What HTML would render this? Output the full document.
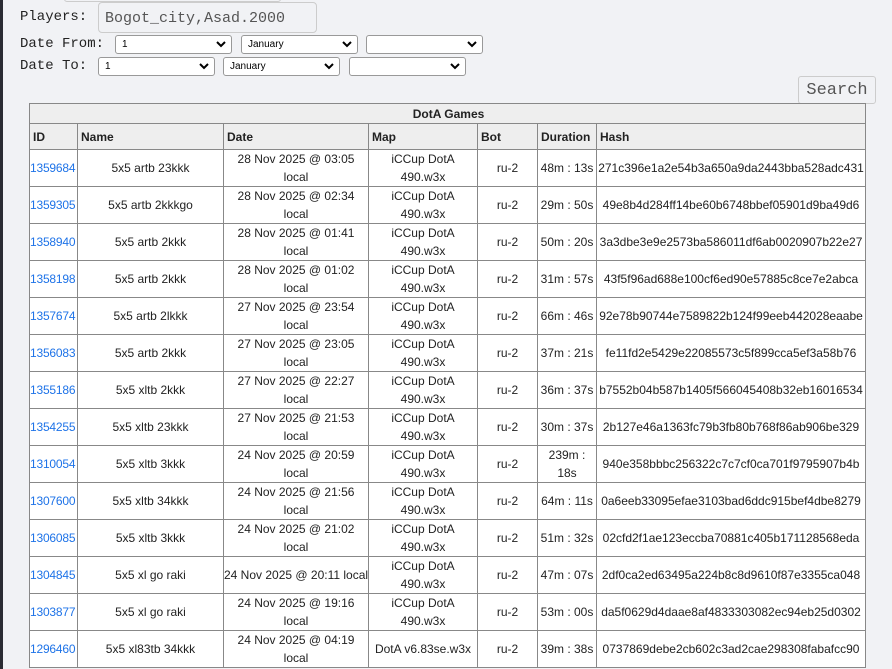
<!DOCTYPE html>
<html><head><meta charset="utf-8"><style>
*{box-sizing:border-box}
html,body{margin:0;width:892px;height:669px;overflow:hidden}
body{background:#f1f2f5;font-family:"Liberation Sans",Arial,sans-serif;position:relative}
.strip{position:absolute;left:0;top:0;width:3px;height:669px;background:#2a2b33}
.lbl{position:absolute;font-family:"Liberation Mono",monospace;font-size:14px;color:#222}
.inp{position:absolute;left:98px;top:2px;width:219px;height:31px;border:1px solid #ccc;border-radius:4px;background:#f1f2f5;font-family:"Liberation Mono",monospace;font-size:15px;color:#555;padding:7px 6px}
.topbox{position:absolute;left:64px;top:-4px;width:217px;height:6px;border:1px solid #ccc;border-radius:3px}
.sel{position:absolute;height:19px;width:117px;border:1px solid #999;border-radius:3px;background:#fff;font-size:10px;color:#000;padding:2px 6px;line-height:13px}
.sel svg{position:absolute;right:5px;top:5px}
.btn{position:absolute;left:798px;top:76px;width:78px;height:28px;border:1px solid #ccc;border-radius:3px;background:#f1f2f5;font-family:"Liberation Mono",monospace;font-size:17px;color:#555;text-align:center;line-height:27px}
table{position:absolute;left:29px;top:103px;width:836px;table-layout:fixed;border-collapse:collapse;background:#fff;font-size:12px;color:#222}
td,th{border:1px solid #888;padding:0 1px;line-height:18px;overflow:hidden}
th{background:#eee;text-align:left;font-weight:bold;height:26px;padding-left:3px}
th.t{text-align:center;height:20px}
td{text-align:center;height:37px}
td.id{text-align:left;color:#1e73e8;padding:0;overflow:visible;letter-spacing:-0.2px}
td.h{white-space:nowrap;padding:0}
</style></head><body>
<div class="strip"></div>
<div class="topbox"></div>
<div class="lbl" style="left:20px;top:9px">Players:</div>
<div class="inp">Bogot_city,Asad.2000</div>
<div class="lbl" style="left:20px;top:36px">Date From:</div>
<div class="lbl" style="left:20px;top:58px">Date To:</div>
<div class="sel" style="left:115px;top:35px">1<svg width="10" height="7" viewBox="0 0 10 7"><path d="M1 1l4 4 4-4" stroke="#000" stroke-width="2" fill="none"/></svg></div>
<div class="sel" style="left:241px;top:35px">January<svg width="10" height="7" viewBox="0 0 10 7"><path d="M1 1l4 4 4-4" stroke="#000" stroke-width="2" fill="none"/></svg></div>
<div class="sel" style="left:366px;top:35px"><svg width="10" height="7" viewBox="0 0 10 7"><path d="M1 1l4 4 4-4" stroke="#000" stroke-width="2" fill="none"/></svg></div>
<div class="sel" style="left:98px;top:57px">1<svg width="10" height="7" viewBox="0 0 10 7"><path d="M1 1l4 4 4-4" stroke="#000" stroke-width="2" fill="none"/></svg></div>
<div class="sel" style="left:223px;top:57px">January<svg width="10" height="7" viewBox="0 0 10 7"><path d="M1 1l4 4 4-4" stroke="#000" stroke-width="2" fill="none"/></svg></div>
<div class="sel" style="left:349px;top:57px"><svg width="10" height="7" viewBox="0 0 10 7"><path d="M1 1l4 4 4-4" stroke="#000" stroke-width="2" fill="none"/></svg></div>
<div class="btn">Search</div>
<table>
<colgroup><col style="width:48px"><col style="width:146px"><col style="width:145px"><col style="width:109px"><col style="width:60px"><col style="width:59px"><col style="width:269px"></colgroup>
<tr><th class="t" colspan="7">DotA Games</th></tr>
<tr><th>ID</th><th>Name</th><th>Date</th><th>Map</th><th>Bot</th><th>Duration</th><th>Hash</th></tr>
<tr><td class="id">1359684</td><td>5x5 artb 23kkk</td><td>28 Nov 2025 @ 03:05 local</td><td>iCCup DotA 490.w3x</td><td>ru-2</td><td class="h">48m : 13s</td><td class="h">271c396e1a2e54b3a650a9da2443bba528adc431</td></tr>
<tr><td class="id">1359305</td><td>5x5 artb 2kkkgo</td><td>28 Nov 2025 @ 02:34 local</td><td>iCCup DotA 490.w3x</td><td>ru-2</td><td class="h">29m : 50s</td><td class="h">49e8b4d284ff14be60b6748bbef05901d9ba49d6</td></tr>
<tr><td class="id">1358940</td><td>5x5 artb 2kkk</td><td>28 Nov 2025 @ 01:41 local</td><td>iCCup DotA 490.w3x</td><td>ru-2</td><td class="h">50m : 20s</td><td class="h">3a3dbe3e9e2573ba586011df6ab0020907b22e27</td></tr>
<tr><td class="id">1358198</td><td>5x5 artb 2kkk</td><td>28 Nov 2025 @ 01:02 local</td><td>iCCup DotA 490.w3x</td><td>ru-2</td><td class="h">31m : 57s</td><td class="h">43f5f96ad688e100cf6ed90e57885c8ce7e2abca</td></tr>
<tr><td class="id">1357674</td><td>5x5 artb 2lkkk</td><td>27 Nov 2025 @ 23:54 local</td><td>iCCup DotA 490.w3x</td><td>ru-2</td><td class="h">66m : 46s</td><td class="h">92e78b90744e7589822b124f99eeb442028eaabe</td></tr>
<tr><td class="id">1356083</td><td>5x5 artb 2kkk</td><td>27 Nov 2025 @ 23:05 local</td><td>iCCup DotA 490.w3x</td><td>ru-2</td><td class="h">37m : 21s</td><td class="h">fe11fd2e5429e22085573c5f899cca5ef3a58b76</td></tr>
<tr><td class="id">1355186</td><td>5x5 xltb 2kkk</td><td>27 Nov 2025 @ 22:27 local</td><td>iCCup DotA 490.w3x</td><td>ru-2</td><td class="h">36m : 37s</td><td class="h">b7552b04b587b1405f566045408b32eb16016534</td></tr>
<tr><td class="id">1354255</td><td>5x5 xltb 23kkk</td><td>27 Nov 2025 @ 21:53 local</td><td>iCCup DotA 490.w3x</td><td>ru-2</td><td class="h">30m : 37s</td><td class="h">2b127e46a1363fc79b3fb80b768f86ab906be329</td></tr>
<tr><td class="id">1310054</td><td>5x5 xltb 3kkk</td><td>24 Nov 2025 @ 20:59 local</td><td>iCCup DotA 490.w3x</td><td>ru-2</td><td>239m : 18s</td><td class="h">940e358bbbc256322c7c7cf0ca701f9795907b4b</td></tr>
<tr><td class="id">1307600</td><td>5x5 xltb 34kkk</td><td>24 Nov 2025 @ 21:56 local</td><td>iCCup DotA 490.w3x</td><td>ru-2</td><td class="h">64m : 11s</td><td class="h">0a6eeb33095efae3103bad6ddc915bef4dbe8279</td></tr>
<tr><td class="id">1306085</td><td>5x5 xltb 3kkk</td><td>24 Nov 2025 @ 21:02 local</td><td>iCCup DotA 490.w3x</td><td>ru-2</td><td class="h">51m : 32s</td><td class="h">02cfd2f1ae123eccba70881c405b171128568eda</td></tr>
<tr><td class="id">1304845</td><td>5x5 xl go raki</td><td class="h">24 Nov 2025 @ 20:11 local</td><td>iCCup DotA 490.w3x</td><td>ru-2</td><td class="h">47m : 07s</td><td class="h">2df0ca2ed63495a224b8c8d9610f87e3355ca048</td></tr>
<tr><td class="id">1303877</td><td>5x5 xl go raki</td><td>24 Nov 2025 @ 19:16 local</td><td>iCCup DotA 490.w3x</td><td>ru-2</td><td class="h">53m : 00s</td><td class="h">da5f0629d4daae8af4833303082ec94eb25d0302</td></tr>
<tr><td class="id">1296460</td><td>5x5 xl83tb 34kkk</td><td>24 Nov 2025 @ 04:19 local</td><td class="h">DotA v6.83se.w3x</td><td>ru-2</td><td class="h">39m : 38s</td><td class="h">0737869debe2cb602c3ad2cae298308fabafcc90</td></tr>
</table>
</body></html>
